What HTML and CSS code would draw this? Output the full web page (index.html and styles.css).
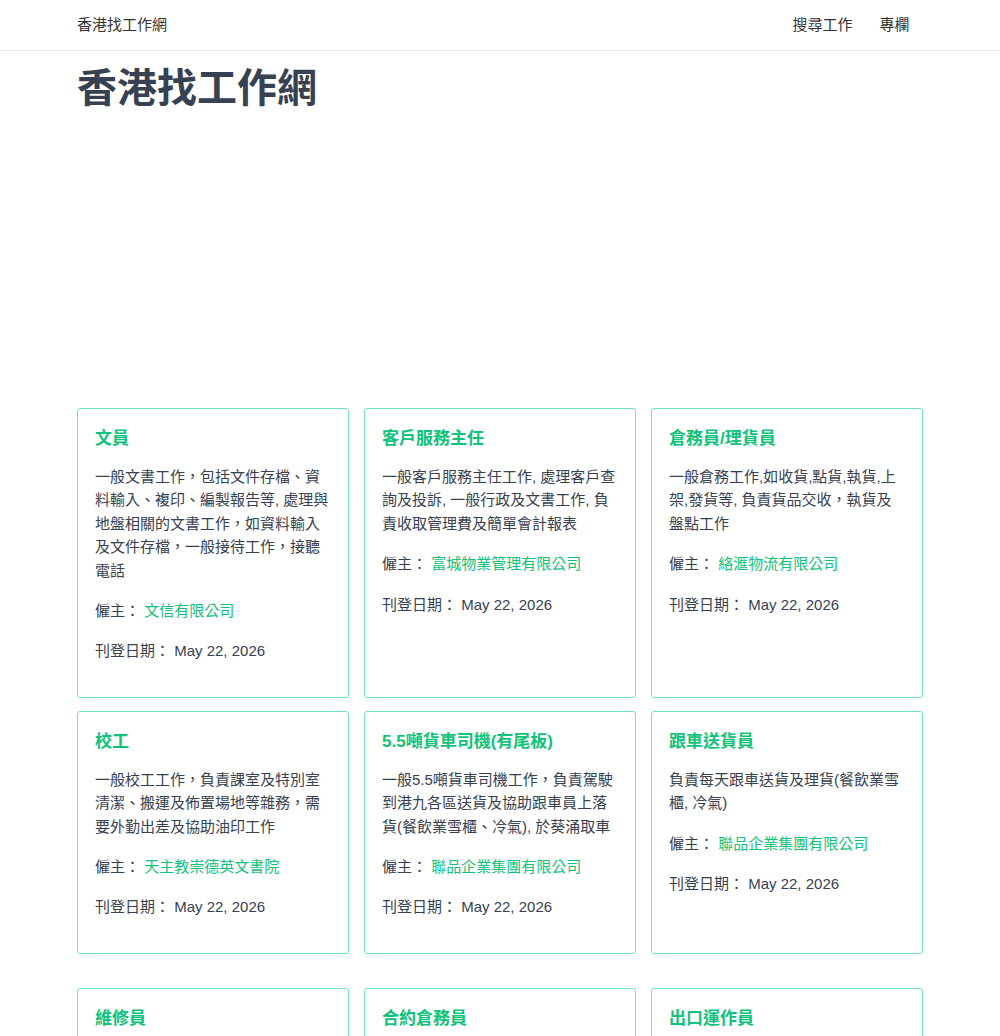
FILE: index.html
```
<!DOCTYPE html>
<html lang="zh-Hant">
  <head>
    <meta charset="UTF-8" />
    <meta name="viewport" content="width=device-width, initial-scale=1.0" />
    <title>香港找工作網</title>
    <link rel="stylesheet" href="styles.css">
  </head>
  <body>
    <header class="top-bar">
      <div class="container top-inner">
        <a class="brand" href="#">香港找工作網</a>
        <nav class="nav">
          <a href="#">搜尋工作</a>
          <a href="#">專欄</a>
        </nav>
      </div>
    </header>

    <main class="container">
      <h1 class="page-title">香港找工作網</h1>
      <div class="ad-slot"></div>

      <div class="job-grid">
        <div class="job-card">
          <h2 class="job-title">文員</h2>
          <p class="job-desc">一般文書工作，包括文件存檔、資料輸入、複印、編製報告等, 處理與地盤相關的文書工作，如資料輸入及文件存檔，一般接待工作，接聽電話</p>
          <p class="job-meta">僱主： <a href="#">文信有限公司</a></p>
          <p class="job-meta">刊登日期： May 22, 2026</p>
        </div>
        <div class="job-card">
          <h2 class="job-title">客戶服務主任</h2>
          <p class="job-desc">一般客戶服務主任工作, 處理客戶查詢及投訴, 一般行政及文書工作, 負責收取管理費及簡單會計報表</p>
          <p class="job-meta">僱主： <a href="#">富城物業管理有限公司</a></p>
          <p class="job-meta">刊登日期： May 22, 2026</p>
        </div>
        <div class="job-card">
          <h2 class="job-title">倉務員/理貨員</h2>
          <p class="job-desc">一般倉務工作,如收貨,點貨,執貨,上架,發貨等, 負責貨品交收，執貨及盤點工作</p>
          <p class="job-meta">僱主： <a href="#">絡滙物流有限公司</a></p>
          <p class="job-meta">刊登日期： May 22, 2026</p>
        </div>
        <div class="job-card">
          <h2 class="job-title">校工</h2>
          <p class="job-desc">一般校工工作，負責課室及特別室清潔、搬運及佈置場地等雜務，需要外勤出差及協助油印工作</p>
          <p class="job-meta">僱主： <a href="#">天主教崇德英文書院</a></p>
          <p class="job-meta">刊登日期： May 22, 2026</p>
        </div>
        <div class="job-card">
          <h2 class="job-title">5.5噸貨車司機(有尾板)</h2>
          <p class="job-desc">一般5.5噸貨車司機工作，負責駕駛到港九各區送貨及協助跟車員上落貨(餐飲業雪櫃、冷氣), 於葵涌取車</p>
          <p class="job-meta">僱主： <a href="#">聯品企業集團有限公司</a></p>
          <p class="job-meta">刊登日期： May 22, 2026</p>
        </div>
        <div class="job-card">
          <h2 class="job-title">跟車送貨員</h2>
          <p class="job-desc">負責每天跟車送貨及理貨(餐飲業雪櫃, 冷氣)</p>
          <p class="job-meta">僱主： <a href="#">聯品企業集團有限公司</a></p>
          <p class="job-meta">刊登日期： May 22, 2026</p>
        </div>
      </div>

      <div class="job-grid">
        <div class="job-card">
          <h2 class="job-title">維修員</h2>
          <p class="job-desc">一般維修工作，負責大廈日常維修保養</p>
          <p class="job-meta">刊登日期： May 22, 2026</p>
        </div>
        <div class="job-card">
          <h2 class="job-title">合約倉務員</h2>
          <p class="job-desc">一般倉務工作，負責收貨及發貨</p>
          <p class="job-meta">刊登日期： May 22, 2026</p>
        </div>
        <div class="job-card">
          <h2 class="job-title">出口運作員</h2>
          <p class="job-desc">一般出口運作工作，處理出口文件</p>
          <p class="job-meta">刊登日期： May 22, 2026</p>
        </div>
      </div>
    </main>
  </body>
</html>
```

FILE: styles.css
```
body {
  margin: 0;
  font-family: "Liberation Sans", "Noto Sans CJK TC", sans-serif;
  color: #374151;
  background: #fff;
}

a {
  text-decoration: none;
}

.container {
  width: 846px;
  margin: 0 auto;
}

.top-bar {
  border-bottom: 1px solid #e5e7eb;
}

.top-inner {
  display: flex;
  justify-content: space-between;
  align-items: center;
  box-sizing: border-box;
  height: 50px;
  padding-bottom: 4px;
}

.brand {
  font-size: 15px;
  color: #333;
}

.nav {
  display: flex;
}

.nav a {
  font-size: 15px;
  color: #333;
  padding: 0 13.5px;
}

.page-title {
  font-size: 40px;
  line-height: 48px;
  font-weight: 700;
  color: #374151;
  margin: 13px 0 0;
}

.ad-slot {
  height: 296px;
}

.job-grid {
  display: grid;
  grid-template-columns: repeat(3, 1fr);
  column-gap: 15px;
  row-gap: 13px;
  margin-bottom: 34px;
}

.job-card {
  border: 1px solid #6ee7b7;
  border-radius: 3px;
  padding: 18px 17px 17px;
}

.job-title {
  font-size: 17px;
  line-height: 24px;
  font-weight: 700;
  color: #10c27a;
  margin: 0 0 14px;
}

.job-desc,
.job-meta {
  font-size: 15px;
  line-height: 23.4px;
  margin: 0 0 17px;
}

.job-meta a {
  color: #10c27a;
}
```
